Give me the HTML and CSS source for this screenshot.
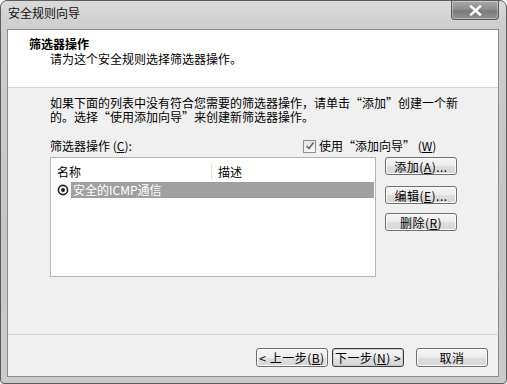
FILE: index.html
```
<!DOCTYPE html>
<html lang="zh-CN">
<head>
<meta charset="UTF-8">
<title>安全规则向导</title>
<link rel="stylesheet" href="styles.css">
</head>
<body>
<div class="window">
    <div class="titlebar">
        <span class="title">安全规则向导</span>
        <div class="close-btn">
            <svg width="13" height="11" viewBox="0 0 13 11"><path d="M2 1.5 L11 9.5 M11 1.5 L2 9.5" stroke="#fff" stroke-width="2.4" stroke-linecap="square"/></svg>
        </div>
    </div>
    <div class="client">
        <div class="wizard-head">
            <div class="head-title">筛选器操作</div>
            <div class="head-sub">请为这个安全规则选择筛选器操作。</div>
        </div>
        <div class="wizard-body">
            <p class="desc">如果下面的列表中没有符合您需要的筛选器操作，请单击“添加”创建一个新<br>的。选择“使用添加向导”来创建新筛选器操作。</p>
            <div class="label-row">
                <span class="list-label">筛选器操作 (<u>C</u>):</span>
                <span class="check">
                    <span class="box"><svg width="10" height="10" viewBox="0 0 10 10"><path d="M1.5 5 L4 7.5 L8.5 1.5" fill="none" stroke="#6a6a6a" stroke-width="1.6"/></svg></span>
                    使用“添加向导” (<u>W</u>)
                </span>
            </div>
            <div class="list-area">
                <div class="list">
                    <div class="list-head">
                        <span class="col-name">名称</span>
                        <span class="col-desc">描述</span>
                    </div>
                    <div class="list-row">
                        <svg class="radio" width="12" height="12" viewBox="0 0 12 12"><circle cx="6" cy="6" r="4.6" fill="#fff" stroke="#1e1e1e" stroke-width="1.6"/><circle cx="6" cy="6" r="2" fill="#1e1e1e"/></svg>
                        <span class="row-text">安全的ICMP通信</span>
                    </div>
                </div>
                <div class="side-buttons">
                    <button class="btn">添加(<u>A</u>)...</button>
                    <button class="btn">编辑(<u>E</u>)...</button>
                    <button class="btn btn-del">删除(<u>R</u>)</button>
                </div>
            </div>
        </div>
        <div class="wizard-foot">
            <button class="btn">&lt; 上一步(<u>B</u>)</button>
            <button class="btn btn-default">下一步(<u>N</u>) &gt;</button>
            <button class="btn btn-cancel">取消</button>
        </div>
    </div>
</div>
</body>
</html>
```
FILE: styles.css
```
body {
    margin: 0;
    font-family: "Noto Sans CJK SC", "Liberation Sans", sans-serif;
    font-size: 12px;
    color: #000;
    background: #fff;
}
.window {
    width: 507px;
    height: 384px;
    box-sizing: border-box;
    border: 1px solid #5c5c5c;
    border-radius: 7px 7px 4px 4px;
    background: linear-gradient(to bottom, #dadada, #cdcdcd 28px, #c6c6c6 60%, #cbcbcb);
    padding: 0 7px 6px 6px;
    display: flex;
    flex-direction: column;
}
.titlebar {
    height: 28px;
    display: flex;
    justify-content: space-between;
    align-items: flex-start;
    padding-left: 1px;
}
.title {
    padding-top: 5px;
    line-height: 14px;
    color: #111;
}
.close-btn {
    width: 46px;
    height: 18px;
    border: 1px solid #5a5a5a;
    border-top: none;
    border-radius: 0 0 4px 4px;
    background: linear-gradient(to bottom, #a8a8a8, #8e8e8e 45%, #7a7a7a 55%, #929292);
    display: flex;
    justify-content: center;
    align-items: center;
    box-shadow: inset 0 0 0 1px rgba(255, 255, 255, 0.35);
}
.client {
    flex: 1;
    box-sizing: border-box;
    border: 1px solid #8c8c8c;
    background: #f0f0f0;
    display: flex;
    flex-direction: column;
}
.wizard-head {
    height: 58px;
    box-sizing: border-box;
    background: #fff;
    border-bottom: 1px solid #d5d5d5;
    padding: 6px 0 0 21px;
}
.head-title {
    font-weight: 700;
    line-height: 15px;
}
.head-sub {
    line-height: 15px;
    margin-left: 21px;
}
.wizard-body {
    height: 246px;
    box-sizing: border-box;
    padding: 8px 0 0 42px;
}
.desc {
    margin: 0;
    line-height: 14px;
    white-space: nowrap;
}
.label-row {
    display: flex;
    align-items: center;
    margin-top: 15px;
    height: 14px;
    line-height: 14px;
}
.list-label {
    width: 253px;
}
.check {
    display: flex;
    align-items: center;
    white-space: nowrap;
}
.box {
    width: 11px;
    height: 11px;
    border: 1px solid #8e8e8e;
    background: linear-gradient(#e6e6e6, #fafafa);
    margin-right: 3px;
    display: flex;
    justify-content: center;
    align-items: center;
}
.list-area {
    display: flex;
    margin-top: 4px;
}
.list {
    width: 326px;
    height: 120px;
    box-sizing: border-box;
    border: 1px solid #b4b4b4;
    background: #fff;
}
.list-head {
    display: flex;
    height: 24px;
    box-sizing: border-box;
    padding-top: 3px;
    align-items: center;
}
.col-name {
    width: 154px;
    padding-left: 6px;
    border-right: 1px solid #e3e3e3;
}
.col-desc {
    padding-left: 6px;
}
.list-row {
    display: flex;
    align-items: center;
    height: 16px;
}
.radio {
    margin: 0 2px 0 6px;
}
.row-text {
    flex: 1;
    height: 16px;
    line-height: 16px;
    background: #a0a0a0;
    color: #fff;
    padding-left: 2px;
    margin-right: 1px;
}
.side-buttons {
    display: flex;
    flex-direction: column;
    margin-left: 9px;
}
.btn {
    font-family: "Noto Sans CJK SC", "Liberation Sans", sans-serif;
    font-size: 12px;
    color: #000;
    width: 72px;
    height: 19px;
    padding: 0;
    line-height: 17px;
    border: 1px solid #707070;
    border-radius: 3px;
    background: linear-gradient(to bottom, #f6f6f6, #ececec 50%, #dedede 51%, #d6d6d6);
    box-shadow: inset 0 0 0 1px #fbfbfb;
    letter-spacing: 0.5px;
}
.side-buttons .btn {
    height: 18px;
    margin-bottom: 11px;
}
.side-buttons .btn:nth-child(2) {
    margin-bottom: 9px;
}
.wizard-foot {
    flex: 1;
    border-top: 1px solid #d5d5d5;
    display: flex;
    justify-content: flex-end;
    align-items: flex-start;
    padding: 13px 10px 0 0;
}
.btn-default {
    margin-left: 4px;
    border-color: #3c3c3c;
    box-shadow: inset 0 0 0 1px #c8c8c8;
}
.btn-cancel {
    margin-left: 12px;
}
```
